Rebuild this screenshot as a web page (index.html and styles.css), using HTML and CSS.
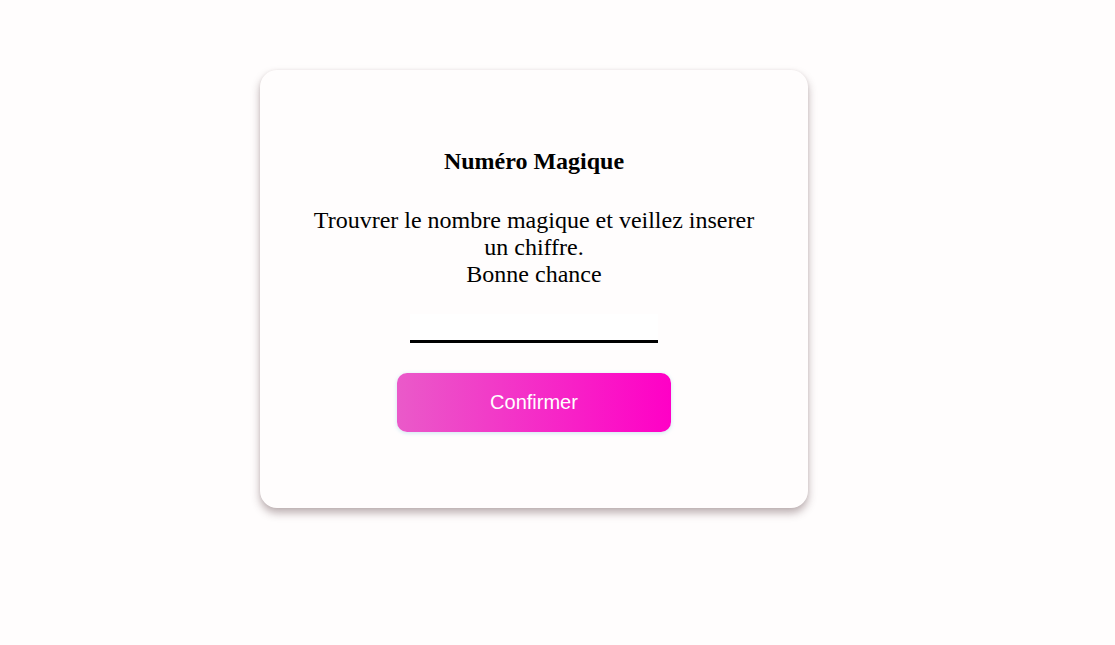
FILE: index.html
```html
<!DOCTYPE html>
<html lang="fr">
<head>
<meta charset="utf-8">
<title>Numéro Magique</title>
<link rel="stylesheet" href="styles.css">
</head>
<body>
<main class="page">
  <section class="card">
    <h2 class="title">Numéro Magique</h2>
    <p class="text">Trouvrer le nombre magique et veillez inserer un chiffre.<br>Bonne chance</p>
    <input class="field" type="text">
    <button class="btn" type="button">Confirmer</button>
  </section>
</main>
</body>
</html>
```

FILE: styles.css
```css
html, body {
  margin: 0;
  padding: 0;
  background: #fffdfd;
}

.page {
  display: flex;
  align-items: flex-start;
  padding: 70px 0 40px 260px;
  font-family: "Liberation Serif", "Times New Roman", serif;
  color: #000;
}

.card {
  box-sizing: border-box;
  width: 548px;
  height: 438px;
  padding: 0 50px;
  background: #fffdfd;
  border-radius: 17px;
  box-shadow: 0 5px 8px rgba(80, 50, 55, 0.38), 0 0 3px rgba(90, 60, 65, 0.08);
  display: flex;
  flex-direction: column;
  align-items: center;
  text-align: center;
}

.title {
  margin: 77px 0 0;
  font-size: 24px;
  line-height: 28px;
  font-weight: bold;
}

.text {
  margin: 32px 0 0;
  font-size: 24px;
  line-height: 27px;
}

.field {
  box-sizing: border-box;
  margin-top: 26px;
  width: 248px;
  height: 29px;
  border: none;
  border-bottom: 3px solid #000;
  background: #ffffff;
  outline: none;
  padding: 0;
}

.btn {
  margin-top: 30px;
  width: 274px;
  height: 59px;
  border: none;
  border-radius: 10px;
  background: linear-gradient(90deg, #ea5ac9, #ff00c6);
  box-shadow: 0 1px 4px rgba(170, 215, 235, 0.6);
  color: #fff;
  font-family: "Liberation Sans", Arial, sans-serif;
  font-size: 20px;
  padding: 0;
}
```
